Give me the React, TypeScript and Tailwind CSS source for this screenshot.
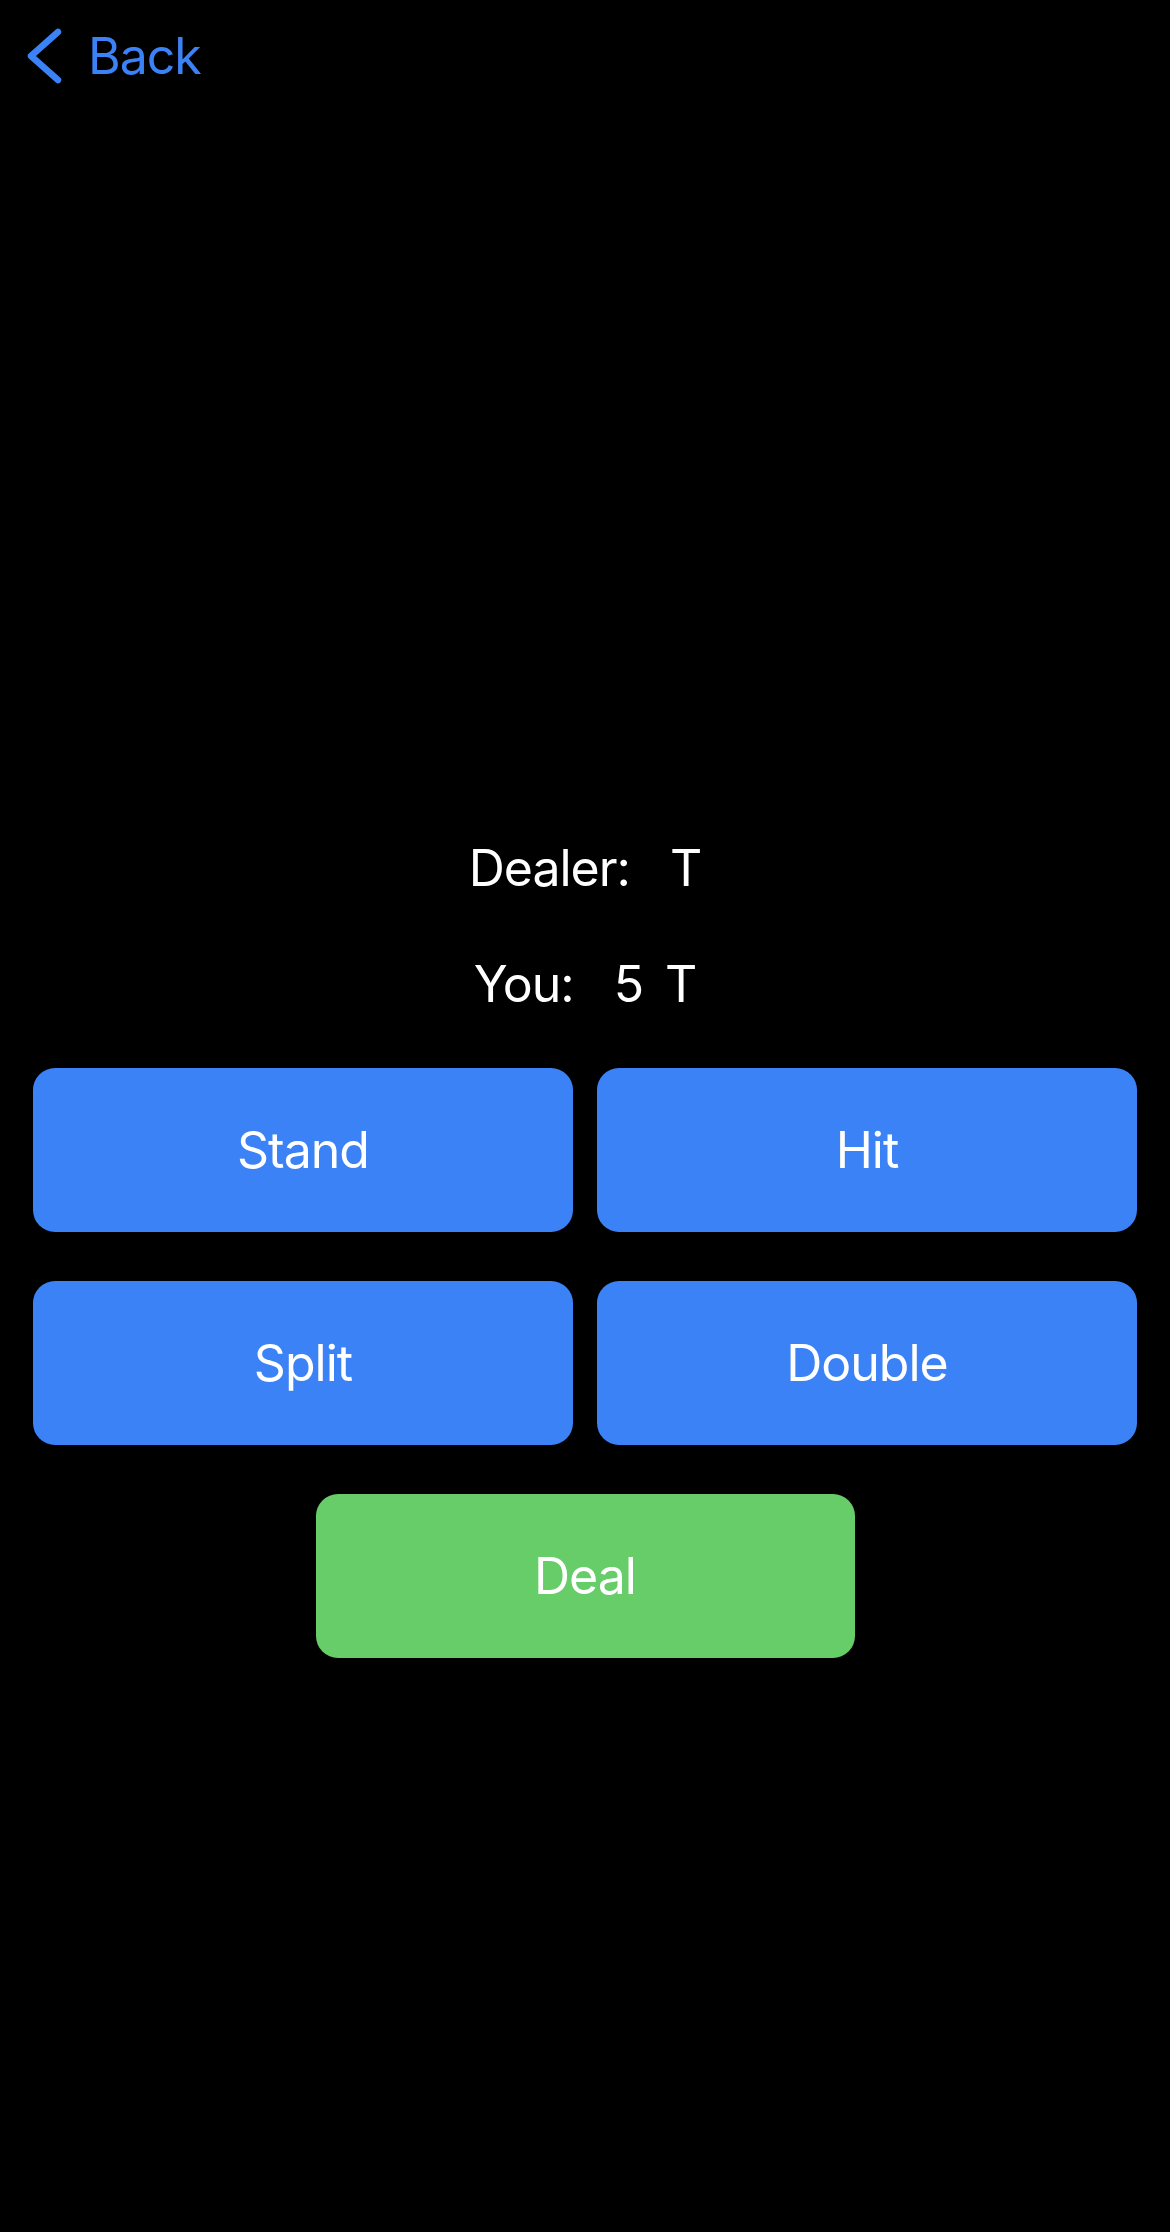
const buttons = ['Stand', 'Hit', 'Split', 'Double'];

export default function App() {
  return (
    <div className="min-h-[2232px] w-full bg-black text-white font-['Inter','Noto_Sans',sans-serif] select-none">
      {/* Nav bar */}
      <div className="h-[112px] flex items-center pl-[24px]">
        <button className="flex items-center text-[#3b82f6]">
          <svg width="42" height="64" viewBox="0 0 42 64" fill="none">
            <path d="M34 8 L7 32 L34 56" stroke="#3b82f6" strokeWidth="6.5" strokeLinecap="round" strokeLinejoin="round" />
          </svg>
          <span className="ml-[22px] text-[50px] leading-[60px] tracking-[-1px]">Back</span>
        </button>
      </div>

      {/* Hands */}
      <div className="mt-[726px] flex flex-col items-center text-[50px] leading-[60px] tracking-[-1px]">
        <div className="h-[60px] flex">
          <span>Dealer:</span>
          <span className="ml-[40px]">T</span>
        </div>
        <div className="h-[60px] mt-[56px] flex">
          <span>You:</span>
          <span className="ml-[40px]">5</span>
          <span className="ml-[22px]">T</span>
        </div>
      </div>

      {/* Actions */}
      <div className="mt-[54px] px-[33px] grid grid-cols-2 gap-x-[24px] gap-y-[49px]">
        {buttons.map((b) => (
          <button
            key={b}
            className="h-[164px] rounded-[22px] bg-[#3b82f6] text-[50px] tracking-[-1px] text-white flex items-center justify-center"
          >
            {b}
          </button>
        ))}
      </div>

      <div className="mt-[49px] flex justify-center">
        <button className="w-[539px] h-[164px] rounded-[22px] bg-[#66cd69] text-[50px] tracking-[-1px] text-white flex items-center justify-center">
          Deal
        </button>
      </div>
    </div>
  );
}
